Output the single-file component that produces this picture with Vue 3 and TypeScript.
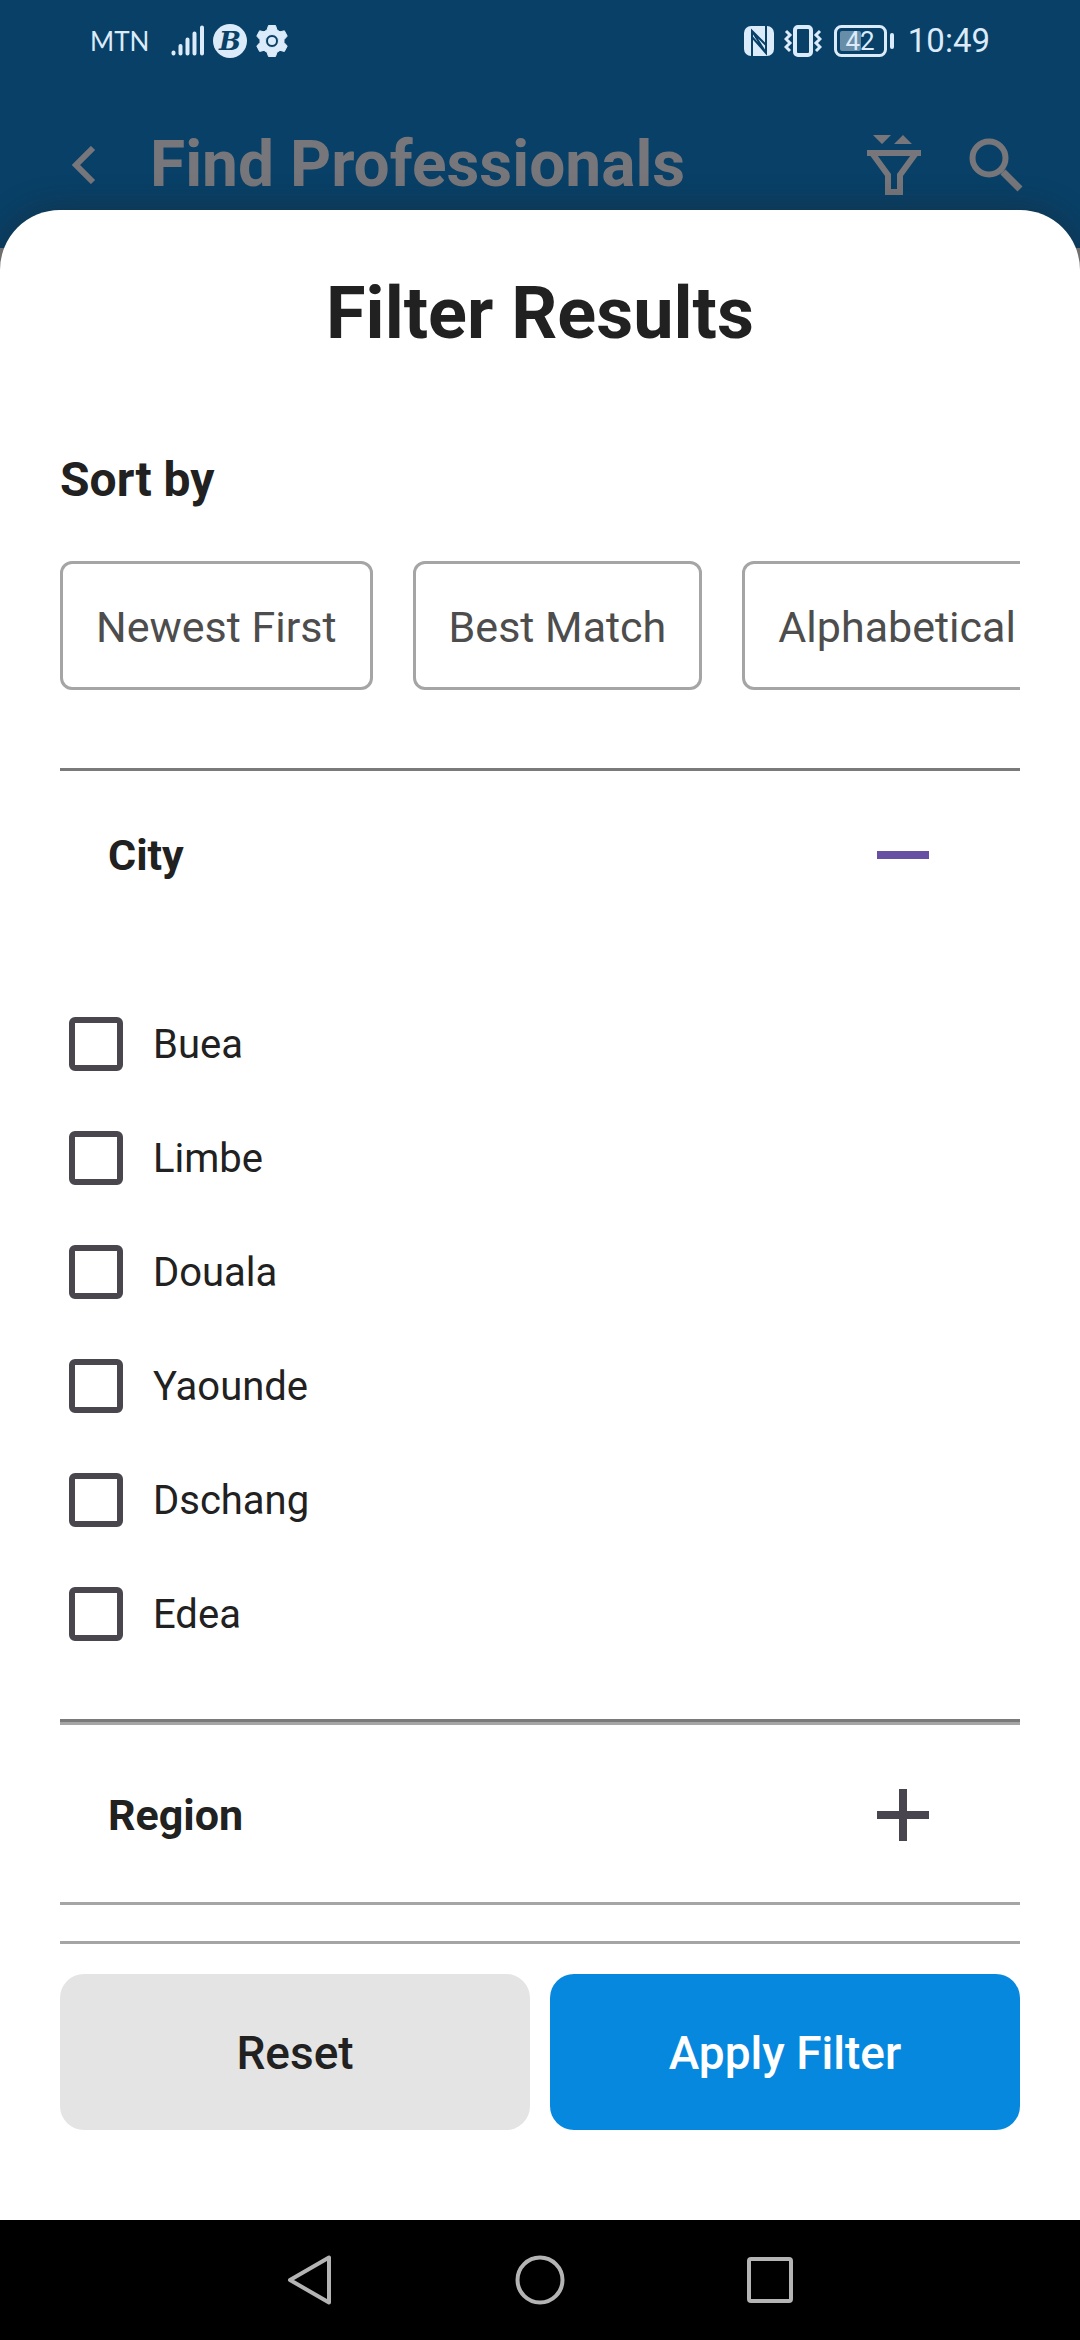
<script setup lang="ts">
import { ref } from 'vue'

interface Section {
  title: string
  open: boolean
  options: string[]
}

const sortOptions: string[] = ['Newest First', 'Best Match', 'Alphabetical']
const selectedSort = ref<string | null>(null)
const selected = ref<string[]>([])

const sections = ref<Section[]>([
  { title: 'City', open: true, options: ['Buea', 'Limbe', 'Douala', 'Yaounde', 'Dschang', 'Edea'] },
  { title: 'Region', open: false, options: [] },
])

function reset(): void {
  selectedSort.value = null
  selected.value = []
}
</script>

<template>
  <div class="screen">
    <header class="top">
      <div class="status">
        <span class="carrier">MTN</span>
        <svg class="signal" width="34" height="32" viewBox="0 0 34 32" aria-hidden="true">
          <g stroke="currentColor" stroke-width="4" stroke-linecap="round">
            <path d="M2.5 27.5v1M9.5 21v7.5M16.500 14.500v14M23.500 8.500v20M31 2.500v26" />
          </g>
        </svg>
        <svg class="badge" width="34" height="34" viewBox="0 0 34 34" aria-hidden="true">
          <circle cx="17" cy="17" r="17" fill="currentColor" />
          <text x="17" y="26" text-anchor="middle" class="badge-letter">B</text>
        </svg>
        <svg class="gear" width="32" height="34" viewBox="0 0 32 34" aria-hidden="true">
          <path
            fill="currentColor"
            fill-rule="evenodd"
            stroke="currentColor"
            stroke-width="1"
            stroke-linejoin="round"
            d="M12.500 1.500h7l1.500 4.500 3 1.800 4.400-1 2.800 5.300-3.200 3.600v2.800l3.200 3.600-2.800 5.300-4.400-1-3 1.800L19.500 32.500h-7L11 28.200l-3-1.800-4.400 1L.8 22.100l3.200-3.600v-2.800L.8 12.100l2.800-5.300 4.400 1 3-1.800zM16 10.500a6.500 6.500 0 1 0 0 13 6.500 6.500 0 1 0 0-13z"
          />
          <circle cx="16" cy="17" r="4" fill="currentColor" />
        </svg>
        <span class="spacer"></span>
        <svg class="nfc" width="30" height="30" viewBox="0 0 30 30" aria-hidden="true">
          <rect width="30" height="30" rx="7" fill="currentColor" />
          <path d="M8 30V5l14 14M22 0v27L8 11M8 5l14 22" fill="none" stroke="#094067" stroke-width="2" />
        </svg>
        <svg class="vibrate" width="38" height="32" viewBox="0 0 38 32" aria-hidden="true">
          <g fill="none" stroke="currentColor" stroke-width="3">
            <rect x="11" y="2" width="16" height="28" rx="3" stroke-width="4" />
            <path d="M2 6l4 4-4 4 4 4-4 4 4 4M36 6l-4 4 4 4-4 4 4 4-4 4" />
          </g>
        </svg>
        <svg class="battery" width="60" height="32" viewBox="0 0 60 32" aria-hidden="true">
          <rect x="1.500" y="1.500" width="50" height="29" rx="6" fill="none" stroke="currentColor" stroke-width="3" />
          <rect x="6" y="6" width="21" height="20" rx="2" fill="currentColor" opacity="0.45" />
          <rect x="56" y="8" width="4" height="16" rx="2" fill="currentColor" />
          <text x="26" y="25" text-anchor="middle" class="battery-text">42</text>
        </svg>
        <time class="clock">10:49</time>
      </div>
      <div class="app-bar">
        <button type="button" class="icon-button back" aria-label="Back">
          <svg width="24" height="38" viewBox="0 0 24 38">
            <path d="M21 2L4 19l17 17" fill="none" stroke="currentColor" stroke-width="6" />
          </svg>
        </button>
        <h1 class="app-title">Find Professionals</h1>
        <button type="button" class="icon-button" aria-label="Filter">
          <svg width="54" height="60" viewBox="0 0 54 60">
            <path d="M6 0h18l-9 9zM27 9l9-9 9 9z" fill="currentColor" />
            <path d="M0 18h54M5 18l16 22v17h12V40l16-22" fill="none" stroke="currentColor" stroke-width="6" />
          </svg>
        </button>
        <button type="button" class="icon-button search" aria-label="Search">
          <svg width="54" height="54" viewBox="0 0 54 54">
            <circle cx="20" cy="20" r="16.500" fill="none" stroke="currentColor" stroke-width="6" />
            <path d="M31 31l3 3" stroke="currentColor" stroke-width="4" />
            <path d="M34 34l17 17" stroke="currentColor" stroke-width="7" />
          </svg>
        </button>
      </div>
    </header>

    <main class="sheet">
      <h2 class="sheet-title">Filter Results</h2>
      <h3 class="sort-title">Sort by</h3>
      <div class="chips">
        <button
          v-for="option in sortOptions"
          :key="option"
          type="button"
          class="chip"
          :class="{ active: selectedSort === option }"
          :aria-pressed="selectedSort === option"
          @click="selectedSort = option"
        >
          {{ option }}
        </button>
      </div>

      <section v-for="section in sections" :key="section.title" class="section" :class="{ open: section.open }">
        <button
          type="button"
          class="section-header"
          :aria-expanded="section.open"
          @click="section.open = !section.open"
        >
          <span>{{ section.title }}</span>
          <svg class="toggle" width="52" height="52" viewBox="0 0 52 52" aria-hidden="true">
            <path :d="section.open ? 'M0 26h52' : 'M0 26h52M26 0v52'" stroke="currentColor" stroke-width="8" />
          </svg>
        </button>
        <div v-if="section.open" class="options">
          <label v-for="option in section.options" :key="option" class="option">
            <input v-model="selected" type="checkbox" :value="option" class="box" />
            <span>{{ option }}</span>
          </label>
        </div>
      </section>

      <footer class="actions">
        <button type="button" class="action reset" @click="reset">Reset</button>
        <button type="button" class="action apply">Apply Filter</button>
      </footer>
    </main>

    <nav class="system-nav">
      <button type="button" class="nav-button" aria-label="Back">
        <svg width="50" height="50" viewBox="0 0 50 50">
          <path d="M44 2.500v45L5 25z" fill="none" stroke="currentColor" stroke-width="4" stroke-linejoin="round" />
        </svg>
      </button>
      <button type="button" class="nav-button" aria-label="Home">
        <svg width="50" height="50" viewBox="0 0 50 50">
          <circle cx="25" cy="25" r="22.500" fill="none" stroke="currentColor" stroke-width="4" />
        </svg>
      </button>
      <button type="button" class="nav-button" aria-label="Recent apps">
        <svg width="50" height="50" viewBox="0 0 50 50">
          <rect x="4" y="4" width="42" height="42" rx="2" fill="none" stroke="currentColor" stroke-width="4" />
        </svg>
      </button>
    </nav>
  </div>
</template>

<style>
body {
  margin: 0;
  background: #7f7f7f;
}
</style>

<style scoped>
.screen {
  display: flex;
  flex-direction: column;
  min-height: 100vh;
  background: #7f7f7f;
  font-family: Roboto, 'Liberation Sans', sans-serif;
  color: #212121;
}

button {
  margin: 0;
  padding: 0;
  border: 0;
  background: none;
  font: inherit;
  color: inherit;
  cursor: pointer;
}

svg {
  display: block;
  flex: none;
}

h1,
h2,
h3 {
  margin: 0;
}

.top {
  height: 248px;
  background: #094067;
}

.status {
  display: flex;
  align-items: center;
  height: 82px;
  padding: 0 90px;
  color: #dbebfa;
}

.carrier {
  font: 26px/32px Lato, sans-serif;
}

.signal {
  margin-left: 22px;
}

.badge {
  margin-left: 8px;
}

.badge-letter {
  font: italic 700 26px 'DejaVu Serif', serif;
  fill: #094067;
}

.gear {
  margin-left: 9px;
}

.spacer {
  flex: 1;
}

.vibrate {
  margin-left: 10px;
}

.battery {
  margin-left: 12px;
}

.battery-text {
  font: 26px Roboto, sans-serif;
  fill: currentColor;
}

.clock {
  margin-left: 14px;
  font-size: 33px;
  line-height: 40px;
}

.app-bar {
  display: flex;
  align-items: center;
  height: 166px;
  padding: 0 57px 0 72px;
  color: #77777b;
}

.app-title {
  flex: 1;
  margin-left: 54px;
  font-size: 64px;
  font-weight: 700;
  line-height: 72px;
}

.search {
  margin-left: 48px;
}

.sheet {
  display: flex;
  flex: 1;
  flex-direction: column;
  margin-top: -38px;
  padding: 64px 60px 90px;
  border-radius: 60px 60px 0 0;
  background: #fff;
  box-shadow: 0 0 32px rgba(32, 32, 32, 0.4);
}

.sheet-title {
  font-size: 72px;
  font-weight: 700;
  line-height: 80px;
  text-align: center;
}

.sort-title {
  margin-top: 96px;
  font-size: 48px;
  font-weight: 700;
  line-height: 60px;
}

.chips {
  display: flex;
  gap: 40px;
  margin-top: 51px;
  overflow-x: auto;
  scrollbar-width: none;
}

.chip {
  flex: none;
  box-sizing: border-box;
  height: 129px;
  padding: 2px 33px 0;
  border: 3px solid #a5a5a5;
  border-radius: 12px;
  font-size: 43px;
  color: #4d4d4d;
  white-space: nowrap;
}

.chip.active {
  border-color: #0688df;
  color: #0688df;
}

.section {
  padding: 6px 0 3px;
  border-top: 3px solid #a5a5a5;
  border-bottom: 3px solid #a5a5a5;
}

.section.open {
  padding: 0;
  border-color: #7a7a7a;
}

.chips + .section {
  margin-top: 78px;
}

.section-header {
  display: flex;
  align-items: center;
  justify-content: space-between;
  width: 100%;
  height: 168px;
  padding: 0 91px 0 48px;
  font-size: 43px;
  font-weight: 700;
}

.toggle {
  color: #49454e;
}

.open .toggle {
  color: #6750a4;
}

.options {
  padding: 48px 0;
}

.option {
  display: flex;
  align-items: center;
  gap: 30px;
  height: 114px;
  padding-left: 9px;
  font-size: 40px;
}

.box {
  appearance: none;
  box-sizing: border-box;
  width: 54px;
  height: 54px;
  margin: 0;
  border: 6px solid #49474d;
  border-radius: 6px;
}

.box:checked {
  background: #6750a4;
}

.actions {
  display: flex;
  gap: 20px;
  margin-top: auto;
  padding-top: 30px;
  border-top: 3px solid #a5a5a5;
}

.action {
  flex: 1;
  height: 156px;
  padding-top: 2px;
  border-radius: 24px;
  font-size: 46px;
  font-weight: 500;
}

.reset {
  background: #e4e4e4;
}

.apply {
  background: #0688df;
  color: #fff;
}

.system-nav {
  display: flex;
  align-items: center;
  justify-content: center;
  gap: 180px;
  height: 120px;
  background: #000;
  color: #b4b4b4;
}
</style>
